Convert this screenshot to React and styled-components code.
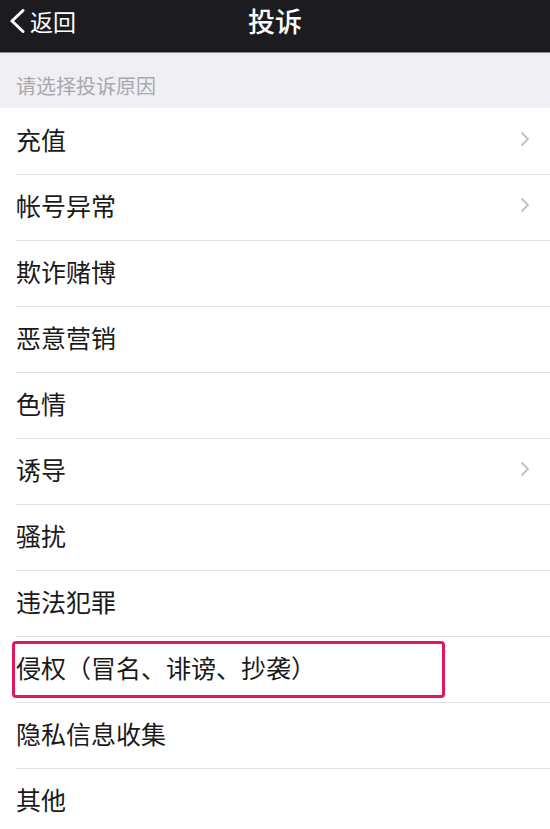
import styled, { createGlobalStyle } from "styled-components";

const GlobalStyle = createGlobalStyle`
  html, body {
    margin: 0;
    padding: 0;
    background: #ffffff;
  }
  body {
    font-family: "Noto Sans CJK SC", "Noto Sans", sans-serif;
  }
`;

const reasons = [
  { label: "充值", more: true },
  { label: "帐号异常", more: true },
  { label: "欺诈赌博" },
  { label: "恶意营销" },
  { label: "色情" },
  { label: "诱导", more: true },
  { label: "骚扰" },
  { label: "违法犯罪" },
  { label: "侵权（冒名、诽谤、抄袭）", marked: true },
  { label: "隐私信息收集" },
  { label: "其他" },
];

const App = () => {
  return (
    <Page>
      <GlobalStyle />
      <NavBar>
        <Back>
          <svg width="18" height="24" viewBox="0 0 18 24">
            <path
              d="M15 1.5 L4 12 L15 22.5"
              fill="none"
              stroke="#ffffff"
              strokeWidth="3"
              strokeLinecap="round"
              strokeLinejoin="round"
            />
          </svg>
          <BackText>返回</BackText>
        </Back>
        <Title>投诉</Title>
      </NavBar>
      <SectionHeader>请选择投诉原因</SectionHeader>
      <List>
        {reasons.map((r) => (
          <Row key={r.label}>
            <Label>{r.label}</Label>
            {r.more && (
              <svg width="10" height="16" viewBox="0 0 10 16">
                <path
                  d="M2 2 L8 8 L2 14"
                  fill="none"
                  stroke="#c4c4c8"
                  strokeWidth="2"
                  strokeLinecap="round"
                  strokeLinejoin="round"
                />
              </svg>
            )}
            {r.marked && <Mark />}
          </Row>
        ))}
      </List>
    </Page>
  );
};

export default App;

const Page = styled.div`
  width: 550px;
  height: 829px;
  overflow: hidden;
  background: #ffffff;
`;

const NavBar = styled.div`
  height: 52px;
  box-sizing: content-box;
  background: #1c1b1f;
  border-bottom: 1px solid #8a8a8e;
  position: relative;
  display: flex;
  align-items: center;
  justify-content: center;
  padding-bottom: 0;
`;

const Back = styled.div`
  position: absolute;
  left: 8px;
  top: 0;
  height: 42px;
  display: flex;
  align-items: center;
  gap: 4px;
`;

const BackText = styled.span`
  color: #ffffff;
  font-size: 23px;
  line-height: 1;
`;

const Title = styled.span`
  color: #ffffff;
  font-size: 27px;
  font-weight: 500;
  line-height: 1;
  margin-bottom: 12px;
`;

const SectionHeader = styled.div`
  height: 55px;
  background: #efeff4;
  display: flex;
  align-items: center;
  padding: 10px 16px 0;
  box-sizing: border-box;
  color: #a9a9ad;
  font-size: 20px;
`;

const List = styled.div`
  display: flex;
  flex-direction: column;
`;

const Row = styled.div`
  position: relative;
  height: 66px;
  box-sizing: border-box;
  padding: 0 20px 4px 16px;
  display: flex;
  align-items: center;
  justify-content: space-between;

  & + &::before {
    content: "";
    position: absolute;
    top: 0;
    left: 16px;
    right: 0;
    height: 1px;
    background: #e2e2e4;
  }
`;

const Label = styled.span`
  color: #1a1a1a;
  font-size: 25px;
  line-height: 1;
`;

const Mark = styled.div`
  position: absolute;
  left: 12px;
  top: 5px;
  width: 433px;
  height: 57px;
  box-sizing: border-box;
  border: 3px solid #e1195a;
  border-radius: 4px;
`;
